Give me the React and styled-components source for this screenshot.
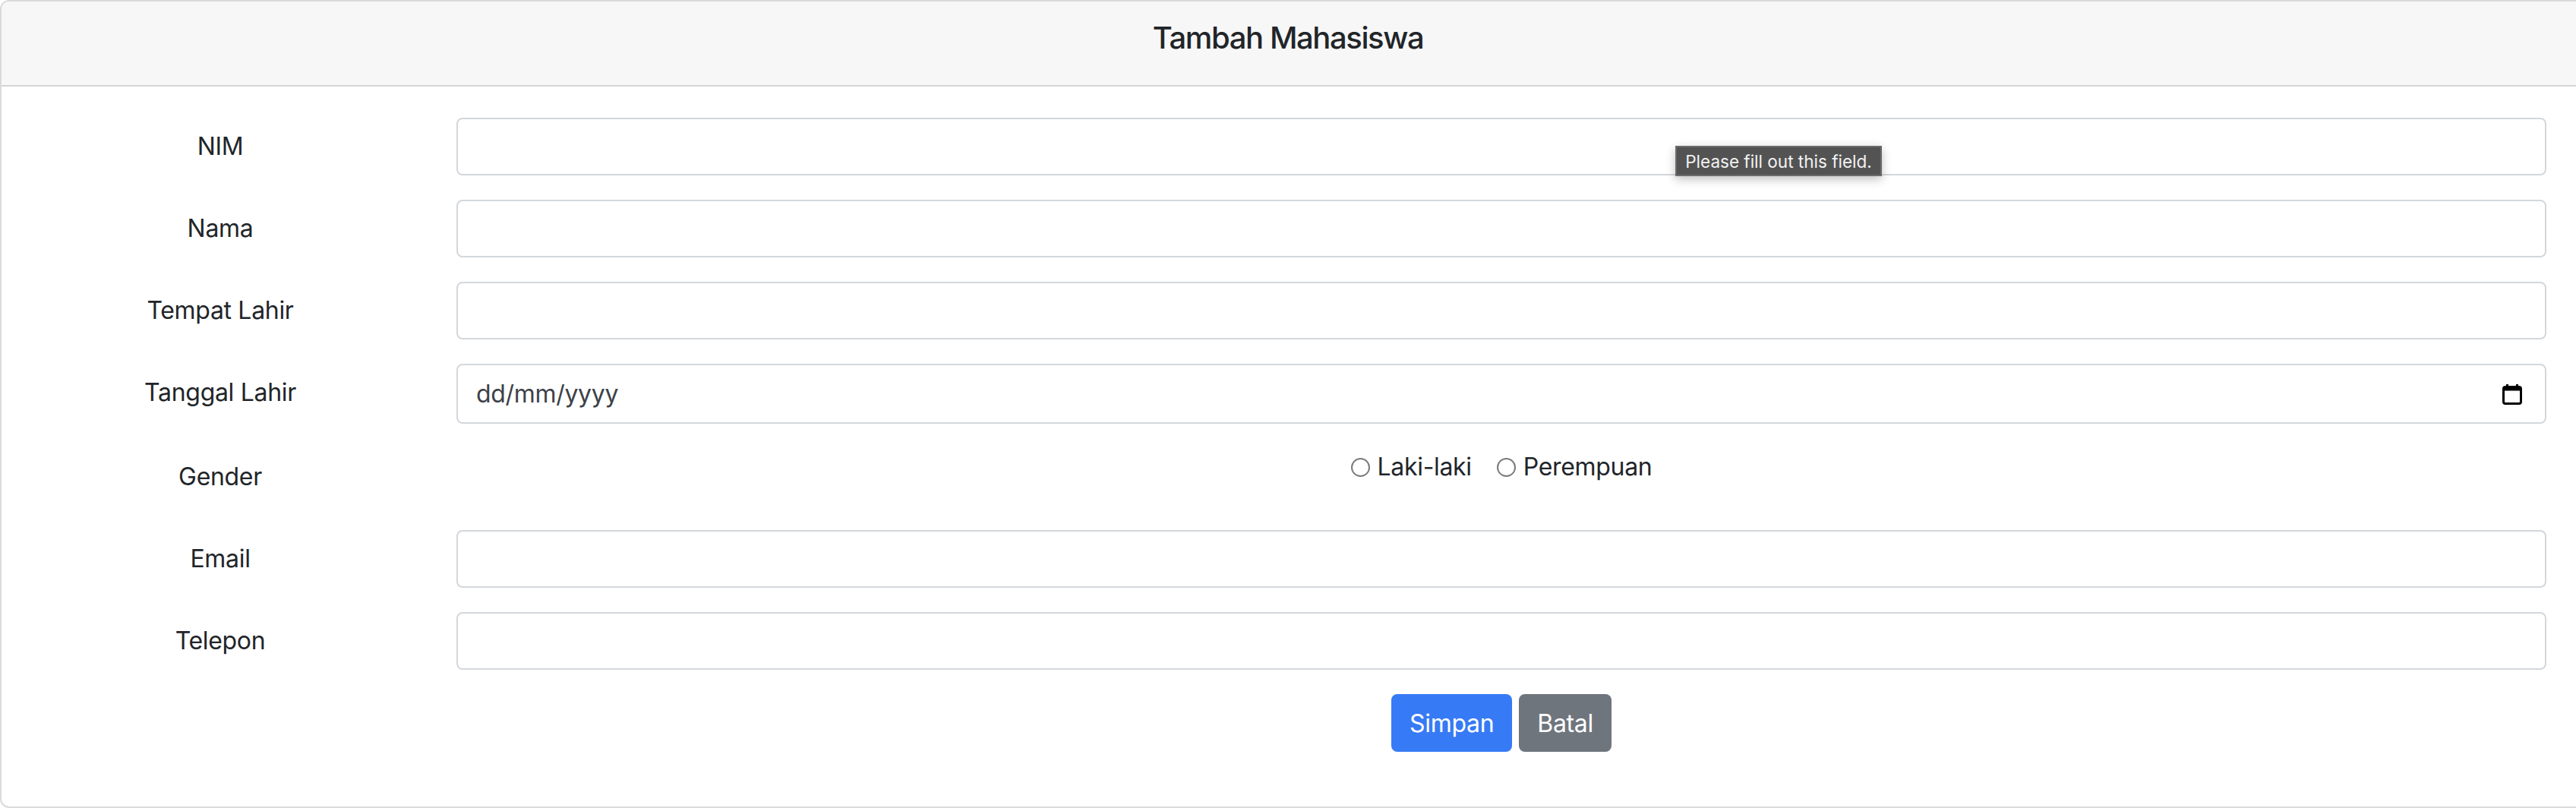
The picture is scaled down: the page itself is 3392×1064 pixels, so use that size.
import React from 'react';
import styled, { createGlobalStyle } from 'styled-components';

const GlobalStyle = createGlobalStyle`
  html, body {
    margin: 0;
    padding: 0;
    background: #fff;
    overflow: hidden;
  }
  body {
    font-family: Inter, "Noto Sans", "Liberation Sans", sans-serif;
    color: #212529;
    letter-spacing: -0.02em;
  }
  * {
    box-sizing: border-box;
  }
`;

const Page = styled.div`
  width: 3392px;
  height: 1064px;
  overflow: hidden;
`;

const Card = styled.div`
  width: 3410px;
  height: 1064px;
  border: 2px solid #dadada;
  border-radius: 12px;
  overflow: hidden;
  display: flex;
  flex-direction: column;
`;

const CardHeader = styled.div`
  height: 112px;
  background: #f7f7f7;
  border-bottom: 2px solid #d6d6d6;
  display: flex;
  justify-content: center;
  padding: 24px 18px 0 0;
`;

const Title = styled.h5`
  margin: 0;
  font-size: 40px;
  line-height: 48px;
  font-weight: 500;
  letter-spacing: -0.035em;
`;

const CardBody = styled.form`
  width: 3392px;
  padding: 41px 41px 0 25px;
`;

const Row = styled.div`
  display: grid;
  grid-template-columns: 526px 1fr;
  column-gap: 48px;
  align-items: start;
  margin-bottom: 32px;
`;

const Label = styled.label`
  text-align: center;
  font-size: 32px;
  line-height: 48px;
  padding: 14px 0;
`;

const Field = styled.div`
  position: relative;
`;

const Input = styled.input`
  display: block;
  width: 100%;
  height: 76px;
  padding: 12px 24px;
  font-family: inherit;
  font-size: 32px;
  color: #212529;
  background: #fff;
  border: 2px solid #d3d7dc;
  border-radius: 8px;
  outline: none;
`;

const DateBox = styled.div`
  display: flex;
  align-items: center;
  justify-content: space-between;
  height: 79px;
  padding: 0 30px 0 24px;
  font-size: 32px;
  color: #3d4248;
  border: 2px solid #d3d7dc;
  border-radius: 8px;
`;

const RadioGroup = styled.div`
  display: flex;
  justify-content: center;
  align-items: center;
  height: 48px;
  margin-top: 1px;
  gap: 33px;
`;

const RadioItem = styled.label`
  display: flex;
  align-items: center;
  gap: 10px;
  font-size: 32px;
  line-height: 48px;
`;

const Radio = styled.input`
  appearance: none;
  margin: 0;
  width: 25px;
  height: 25px;
  border: 2px solid #7b7b7b;
  border-radius: 50%;
  background: #fff;
`;

const Actions = styled.div`
  display: flex;
  justify-content: center;
  gap: 9px;
`;

const Button = styled.button`
  height: 76px;
  padding: 0 24px;
  font-family: inherit;
  font-size: 32px;
  letter-spacing: -0.01em;
  color: #fff;
  border: none;
  border-radius: 8px;
  background: ${(p) => (p.$variant === 'secondary' ? '#6f757d' : '#377af5')};
`;

const Tooltip = styled.div`
  position: absolute;
  left: 1605px;
  top: 37px;
  width: 272px;
  height: 40px;
  display: flex;
  align-items: center;
  justify-content: center;
  background: #535353;
  border: 2px solid #6b6b6b;
  color: #f2f2f2;
  font-size: 22.5px;
  letter-spacing: 0;
  box-shadow: 0 4px 12px rgba(0, 0, 0, 0.25);
`;

const CalendarIcon = () => (
  <svg width="26" height="28" viewBox="0 0 26 28">
    <rect x="1.5" y="4.5" width="23" height="22" rx="2.5" fill="none" stroke="#000" strokeWidth="3" />
    <rect x="1.5" y="4.5" width="23" height="5" fill="#000" />
    <rect x="5" y="1" width="3" height="5" fill="#000" />
    <rect x="18" y="1" width="3" height="5" fill="#000" />
  </svg>
);

const fields = [
  { id: 'nim', label: 'NIM', tooltip: true },
  { id: 'nama', label: 'Nama' },
  { id: 'tempat', label: 'Tempat Lahir' },
];

const App = () => (
  <Page>
    <GlobalStyle />
    <Card>
      <CardHeader>
        <Title>Tambah Mahasiswa</Title>
      </CardHeader>
      <CardBody>
        {fields.map((f) => (
          <Row key={f.id}>
            <Label htmlFor={f.id}>{f.label}</Label>
            <Field>
              <Input id={f.id} type="text" />
              {f.tooltip && <Tooltip>Please fill out this field.</Tooltip>}
            </Field>
          </Row>
        ))}
        <Row>
          <Label>Tanggal Lahir</Label>
          <DateBox>
            <span>dd/mm/yyyy</span>
            <CalendarIcon />
          </DateBox>
        </Row>
        <Row>
          <Label>Gender</Label>
          <RadioGroup>
            <RadioItem>
              <Radio type="radio" name="gender" />
              Laki-laki
            </RadioItem>
            <RadioItem>
              <Radio type="radio" name="gender" />
              Perempuan
            </RadioItem>
          </RadioGroup>
        </Row>
        <Row>
          <Label htmlFor="email">Email</Label>
          <Input id="email" type="email" />
        </Row>
        <Row>
          <Label htmlFor="telp">Telepon</Label>
          <Input id="telp" type="text" />
        </Row>
        <Row>
          <span />
          <Actions>
            <Button type="button">Simpan</Button>
            <Button type="button" $variant="secondary">Batal</Button>
          </Actions>
        </Row>
      </CardBody>
    </Card>
  </Page>
);

export default App;
